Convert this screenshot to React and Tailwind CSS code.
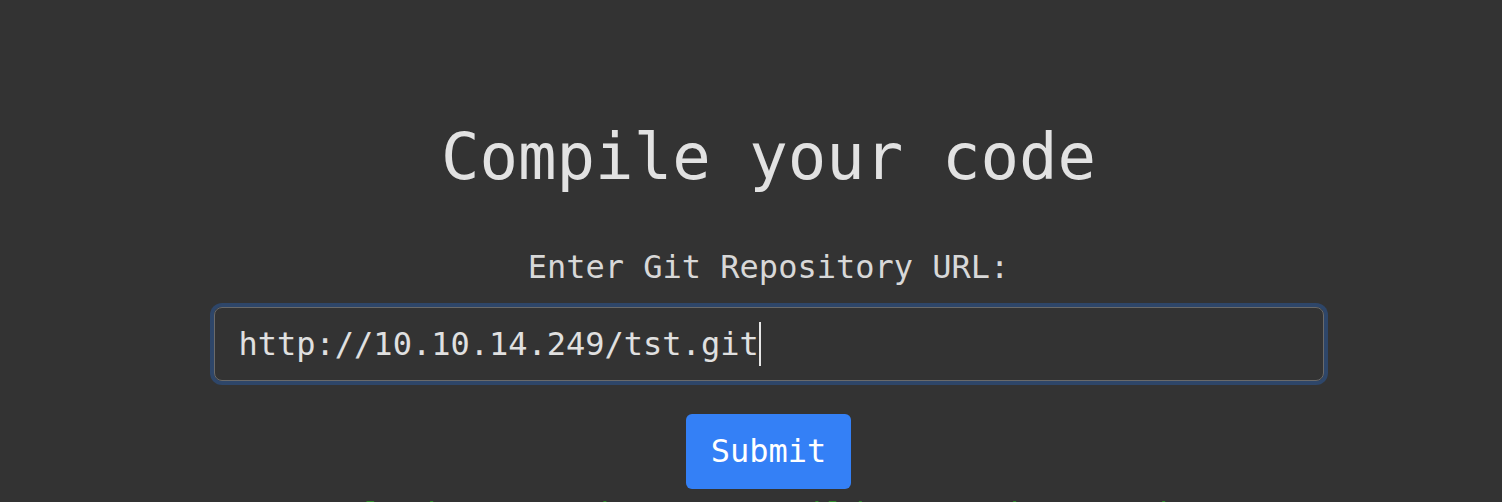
import React from 'react';

const mono = { fontFamily: '"DejaVu Sans Mono", "Liberation Mono", monospace' };

const App = () => {
  return (
    <div className="min-h-screen bg-[#333333] text-[#dedede] overflow-hidden" style={mono}>
      <div className="flex flex-col items-center pl-[35px] pt-[119px]">
        <h1 className="text-[64px] leading-[1.2] text-[#e2e2e2]">Compile your code</h1>

        <label className="mt-[47px] text-[32px] leading-[48px] text-[#d8d8d8]">Enter Git Repository URL:</label>

        <div className="mt-[16px] w-[1110px] h-[74px] border border-[#6a6a6a] rounded-[8px] shadow-[0_0_0_4px_#2e4669] px-6 flex items-center text-[32px] text-[#e0e0e0]">
          <span>http://10.10.14.249/tst.git</span>
          <span className="w-[2px] h-[44px] bg-[#e6e6e6]" />
        </div>

        <button
          type="button"
          className="mt-[33px] h-[75px] px-[25px] bg-[#3480f6] rounded-[6px] text-white text-[32px] leading-[48px]"
        >
          Submit
        </button>

        <p className="mt-[1px] text-[32px] leading-[48px] text-[#2f8a2a] whitespace-nowrap">
          Cloning repository... Build started: tst.git
        </p>
      </div>
    </div>
  );
};

export default App;
